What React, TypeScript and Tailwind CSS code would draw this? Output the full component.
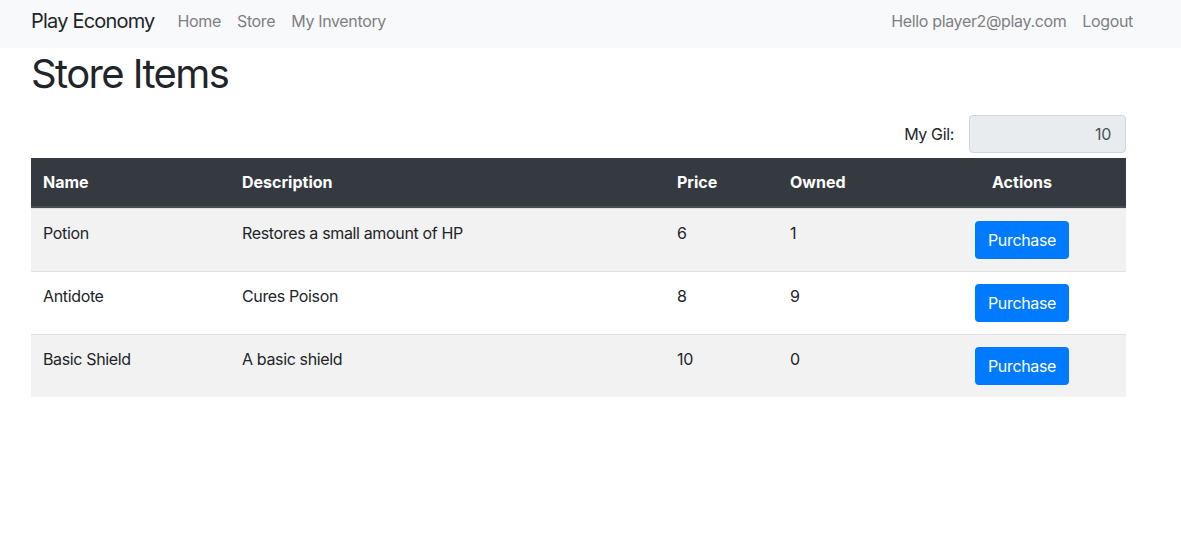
import React from "react";

interface StoreItem {
  id: number;
  name: string;
  description: string;
  price: number;
  owned: number;
}

const items: StoreItem[] = [
  { id: 1, name: "Potion", description: "Restores a small amount of HP", price: 6, owned: 1 },
  { id: 2, name: "Antidote", description: "Cures Poison", price: 8, owned: 9 },
  { id: 3, name: "Basic Shield", description: "A basic shield", price: 10, owned: 0 },
];

function NavBar() {
  return (
    <nav className="h-12 bg-[#f8f9fa] flex items-center pl-[31px] pr-[40px] pb-[6px]">
      <span className="text-[20px] tracking-[-0.04em] text-[#212529] mr-[15px]">Play Economy</span>
      <div className="flex flex-1 text-[16px] text-[#7f8081]">
        <a className="px-2">Home</a>
        <a className="px-2">Store</a>
        <a className="px-2">My Inventory</a>
      </div>
      <div className="flex text-[16px] text-[#7f8081]">
        <span className="px-2">Hello player2@play.com</span>
        <a className="px-2">Logout</a>
      </div>
    </nav>
  );
}

function App() {
  return (
    <div className="min-h-screen bg-white text-[#212529] tracking-[-0.022em] font-['Inter',sans-serif]">
      <NavBar />
      <main className="pl-[31px] w-[1126px]">
        <h1 className="text-[40px] tracking-[-0.04em] leading-[48px] mt-[2px] font-normal">Store Items</h1>
        <div className="flex justify-end items-center mt-[17px] mb-[5px]">
          <label className="mr-[15px] text-[16px]">My Gil:</label>
          <input
            readOnly
            value="10"
            className="w-[157px] h-[38px] bg-[#e9ecef] border border-[#ced4da] rounded-[4px] text-right px-[14px] text-[16px] text-[#495057] outline-none"
          />
        </div>
        <table className="w-full text-[16px] border-separate border-spacing-0">
          <thead>
            <tr className="bg-[#343a40] text-white tracking-normal">
              <th className="w-[199px] text-left font-bold p-3 border-b-2 border-[#454d55]">Name</th>
              <th className="w-[435px] text-left font-bold p-3 border-b-2 border-[#454d55]">Description</th>
              <th className="w-[113px] text-left font-bold p-3 border-b-2 border-[#454d55]">Price</th>
              <th className="w-[140px] text-left font-bold p-3 border-b-2 border-[#454d55]">Owned</th>
              <th className="text-center font-bold p-3 border-b-2 border-[#454d55]">Actions</th>
            </tr>
          </thead>
          <tbody>
            {items.map((item, i) => (
              <tr key={item.id} className={i % 2 === 0 ? "bg-[#f2f2f2]" : "bg-white"}>
                <td className="p-3 align-top border-t border-[#dee2e6]">{item.name}</td>
                <td className="p-3 align-top border-t border-[#dee2e6]">{item.description}</td>
                <td className="p-3 align-top border-t border-[#dee2e6]">{item.price}</td>
                <td className="p-3 align-top border-t border-[#dee2e6]">{item.owned}</td>
                <td className="p-3 align-top text-center border-t border-[#dee2e6]">
                  <button className="h-[38px] w-[94px] bg-[#007bff] text-white rounded-[4px] text-[16px] align-top">
                    Purchase
                  </button>
                </td>
              </tr>
            ))}
          </tbody>
        </table>
      </main>
    </div>
  );
}

export default App;
